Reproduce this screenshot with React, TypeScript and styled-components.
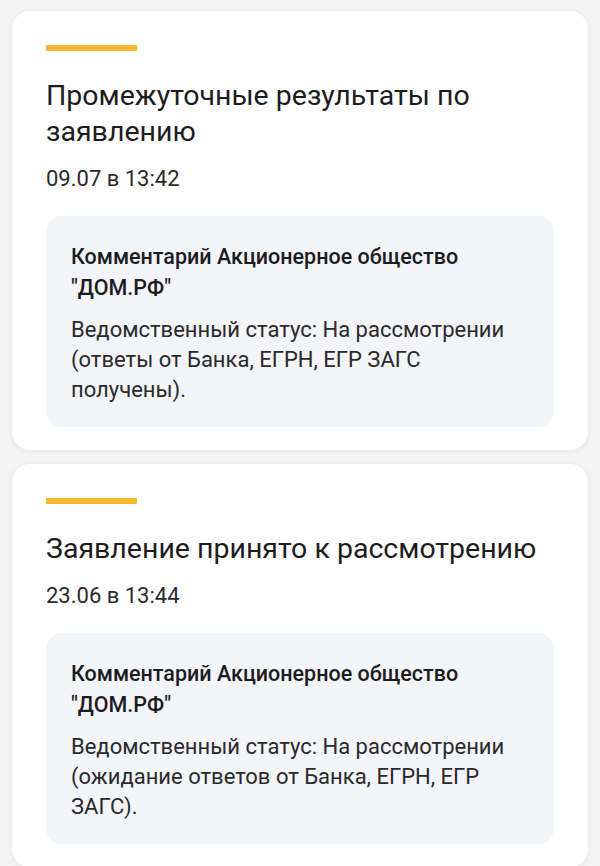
import React from 'react';
import styled, { createGlobalStyle } from 'styled-components';

interface Update {
  id: string;
  title: string;
  date: string;
  author: string;
  status: string;
}

const updates: Update[] = [
  {
    id: 'u1',
    title: 'Промежуточные результаты по заявлению',
    date: '09.07 в 13:42',
    author: 'Комментарий Акционерное общество "ДОМ.РФ"',
    status: 'Ведомственный статус: На рассмотрении (ответы от Банка, ЕГРН, ЕГР ЗАГС получены).',
  },
  {
    id: 'u2',
    title: 'Заявление принято к рассмотрению',
    date: '23.06 в 13:44',
    author: 'Комментарий Акционерное общество "ДОМ.РФ"',
    status: 'Ведомственный статус: На рассмотрении (ожидание ответов от Банка, ЕГРН, ЕГР ЗАГС).',
  },
];

const GlobalStyle = createGlobalStyle`
  html, body {
    margin: 0;
    padding: 0;
    background: #f4f4f5;
  }
  body {
    font-family: Roboto, 'Noto Sans', 'Liberation Sans', sans-serif;
    color: #1c1c1e;
  }
`;

const Feed = styled.div`
  display: flex;
  flex-direction: column;
  gap: 14px;
  padding: 11px 12px 0;
`;

const Card = styled.section`
  background: #ffffff;
  border-radius: 18px;
  padding: 34px 34px 23px;
  box-shadow: 0 1px 6px rgba(0, 0, 0, 0.07);
`;

const Accent = styled.div`
  width: 91px;
  height: 6px;
  border-radius: 1px;
  background: #f8b72d;
`;

const Title = styled.h2`
  margin: 27px 0 0;
  font-size: 28.5px;
  line-height: 36px;
  font-weight: 400;
  color: #1c1c1e;
`;

const Date = styled.div`
  margin-top: 14px;
  font-size: 22px;
  line-height: 30px;
  color: #2a2a2c;
`;

const Comment = styled.div`
  margin-top: 22px;
  background: #f3f5f9;
  border-radius: 16px;
  padding: 25px 25px 22px;
`;

const Author = styled.div`
  font-size: 21.5px;
  line-height: 31px;
  font-weight: 500;
  color: #1c1c1e;
`;

const Status = styled.div`
  margin-top: 12px;
  font-size: 22px;
  line-height: 30px;
  color: #2a2a2c;
`;

const App: React.FC = () => (
  <>
    <GlobalStyle />
    <Feed>
      {updates.map((u) => (
        <Card key={u.id}>
          <Accent />
          <Title>{u.title}</Title>
          <Date>{u.date}</Date>
          <Comment>
            <Author>{u.author}</Author>
            <Status>{u.status}</Status>
          </Comment>
        </Card>
      ))}
    </Feed>
  </>
);

export default App;
